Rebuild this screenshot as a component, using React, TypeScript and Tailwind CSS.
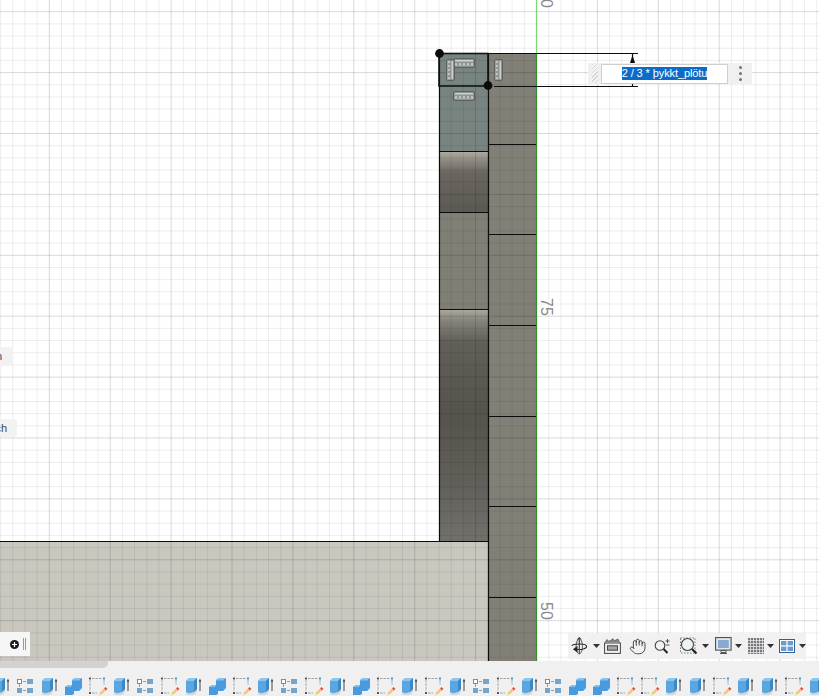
import { Hand } from 'lucide-react';

const range = (n: number) => Array.from({ length: n }, (_, i) => i);

// minor grid every 12.18px, every fifth line is a major one
function GridLines() {
  return (
    <g>
      {range(70).map(k => {
        const x = 0.6 + 12.18 * k;
        const major = (k + 1) % 5 === 0;
        return <line key={k} x1={x} y1={0} x2={x} y2={661} stroke="#000" strokeOpacity={major ? 0.15 : 0.07} />;
      })}
      {range(56).map(k => {
        const y = 11.7 + 12.18 * k;
        const major = k % 5 === 0;
        return <line key={k} x1={0} y1={y} x2={819} y2={y} stroke="#000" strokeOpacity={major ? 0.15 : 0.07} />;
      })}
    </g>
  );
}

function ConstraintH({ x, y }: { x: number; y: number }) {
  return (
    <g transform={`translate(${x} ${y})`}>
      <rect x={0.5} y={0.5} width={21} height={9} rx={1.5} fill="#8f9492" stroke="#3f4644" strokeWidth={0.6} />
      <line x1={2} y1={2.8} x2={20} y2={2.8} stroke="#d6d9d7" strokeWidth={1.3} />
      {[4, 8, 12, 16, 20].map(t => (
        <path key={t} d={`M${t - 2} 7.8 L${t - 1} 5 L${t} 7.8`} fill="none" stroke="#d6d9d7" strokeWidth={0.8} />
      ))}
    </g>
  );
}

function ConstraintV({ x, y }: { x: number; y: number }) {
  return (
    <g transform={`translate(${x} ${y})`}>
      <rect x={0.5} y={0.5} width={8} height={21} rx={1.5} fill="#8f9492" stroke="#3f4644" strokeWidth={0.6} />
      <line x1={6.2} y1={2} x2={6.2} y2={20} stroke="#d6d9d7" strokeWidth={1.3} />
      {[4, 8, 12, 16, 20].map(t => (
        <path key={t} d={`M1.5 ${t - 2} L4 ${t - 1} L1.5 ${t}`} fill="none" stroke="#d6d9d7" strokeWidth={0.8} />
      ))}
    </g>
  );
}

function Drawing() {
  return (
    <svg width={819} height={661} className="absolute inset-0">
      <defs>
        <linearGradient id="bandA" x1="0" y1="0" x2="0" y2="1">
          <stop offset="0" stopColor="#b1aea5" />
          <stop offset="0.16" stopColor="#8c8981" />
          <stop offset="0.36" stopColor="#6a665f" />
          <stop offset="1" stopColor="#5c5953" />
        </linearGradient>
        <linearGradient id="bandB" x1="0" y1="0" x2="0" y2="1">
          <stop offset="0" stopColor="#aeaba3" />
          <stop offset="0.05" stopColor="#86837b" />
          <stop offset="0.14" stopColor="#625f58" />
          <stop offset="0.45" stopColor="#56534c" />
          <stop offset="0.75" stopColor="#615f59" />
          <stop offset="1" stopColor="#71706a" />
        </linearGradient>
      </defs>
      <rect width={819} height={661} fill="#fff" />
      <rect x={0} y={541} width={489} height={120} fill="#cac7bf" />
      <rect x={488} y={53} width={48} height={608} fill="#827f76" />
      <rect x={439} y={53} width={49} height={98} fill="#78847f" />
      <rect x={439} y={151} width={49} height={61} fill="url(#bandA)" />
      <rect x={439} y={212} width={49} height={97} fill="#807f76" />
      <rect x={439} y={309} width={49} height={232} fill="url(#bandB)" />
      <GridLines />

      <g stroke="#0c0c0c" strokeWidth={1.2}>
        <line x1={0} y1={541.5} x2={489} y2={541.5} />
        <line x1={439.5} y1={53} x2={439.5} y2={541} />
        <line x1={488.5} y1={53} x2={488.5} y2={661} />
        <line x1={439} y1={151.5} x2={488} y2={151.5} />
        <line x1={439} y1={212.5} x2={488} y2={212.5} />
        <line x1={439} y1={309.5} x2={488} y2={309.5} />
        {[144.5, 234.5, 325.5, 416.5, 506.5, 597.5].map(y => (
          <line key={y} x1={489} y1={y} x2={536} y2={y} />
        ))}
      </g>

      <line x1={536.5} y1={0} x2={536.5} y2={53} stroke="#78d878" strokeWidth={1.2} />
      <line x1={536.5} y1={53} x2={536.5} y2={661} stroke="#2f8f2f" strokeWidth={1.2} />

      {/* dimension */}
      <g stroke="#0c0c0c" strokeWidth={1.2}>
        <line x1={488} y1={53.5} x2={638} y2={53.5} />
        <line x1={494} y1={86.5} x2={638} y2={86.5} />
        <line x1={632.5} y1={54} x2={632.5} y2={58} />
        <line x1={632.5} y1={84} x2={632.5} y2={86} />
      </g>
      <path d="M632 56.5 H633 L635 63 H630 Z" fill="#0c0c0c" />

      {/* selected rectangle */}
      <rect x={439} y={53.5} width={49} height={32.5} fill="none" stroke="#0e1616" strokeWidth={1.6} />
      <ConstraintH x={453} y={58} />
      <ConstraintV x={446} y={59} />
      <ConstraintV x={494} y={59} />
      <ConstraintH x={453} y={91} />
      <circle cx={439.5} cy={53.5} r={4.4} fill="#0c0c0c" />
      <circle cx={488} cy={85.5} r={4.4} fill="#0c0c0c" />

      {/* ruler numbers */}
      <g fill="#8a8a8a" fontSize={16} fontFamily="Liberation Sans, sans-serif">
        <text transform="translate(541 -1) rotate(90)">0</text>
        <text transform="translate(541 298) rotate(90)">75</text>
        <text transform="translate(541 602) rotate(90)">50</text>
      </g>
    </svg>
  );
}

function Caret() {
  return <svg width={7} height={4} viewBox="0 0 7 4" className="shrink-0"><path d="M0 0 H7 L3.5 4 Z" fill="#333" /></svg>;
}

function OrbitIcon() {
  return (
    <svg width={18} height={20} viewBox="0 0 18 20" fill="none" stroke="#2a2a2a" strokeWidth={1.1}>
      <path d="M9 1 V19 M7 3 L9 1 L11 3" />
      <ellipse cx={9} cy={10.5} rx={3.5} ry={8} fill="none" stroke="#666" />
      <path d="M1 10 C1 7 17 7 17 10.5 C17 13 11 14 6 13.6" />
      <path d="M6.5 11 L3 13.6 L6.5 16 Z" fill="#1a1a1a" />
    </svg>
  );
}

function CaptureIcon() {
  return (
    <svg width={17} height={16} viewBox="0 0 17 16" fill="none" stroke="#444" strokeWidth={1}>
      <rect x={0.6} y={5} width={15.8} height={10.4} fill="#f2f2f2" />
      <rect x={3.5} y={7.8} width={10} height={4.4} fill="#a3a7ac" />
      <path d="M1 4.5 L3 1.5 L5 3.5 L9 0.8 L10 3 L14 1 L15.5 4.5" fill="#888" stroke="#555" strokeWidth={0.8} />
    </svg>
  );
}

function ZoomPlusIcon() {
  return (
    <svg width={17} height={16} viewBox="0 0 17 16" fill="none">
      <circle cx={6} cy={7.5} r={4.8} fill="#eef4f8" stroke="#444" strokeWidth={1.1} />
      <line x1={9.6} y1={11} x2={13.5} y2={15} stroke="#222" strokeWidth={2} />
      <path d="M13.5 1 V5 M11.5 3 H15.5 M11.5 7 H15.5" stroke="#444" strokeWidth={0.9} />
    </svg>
  );
}

function FitIcon() {
  return (
    <svg width={18} height={18} viewBox="0 0 18 18" fill="none">
      <rect x={0.5} y={1} width={14.5} height={15} stroke="#777" strokeDasharray="1.5 1.5" />
      <circle cx={7.5} cy={7.5} r={6} fill="#eef4f8" stroke="#444" strokeWidth={1.1} />
      <line x1={12} y1={12} x2={16.5} y2={16.5} stroke="#222" strokeWidth={2.2} />
    </svg>
  );
}

function DisplayIcon() {
  return (
    <svg width={17} height={18} viewBox="0 0 17 18" fill="none">
      <rect x={0.6} y={0.6} width={15.5} height={12.5} fill="#dfe6ee" stroke="#3f3f3f" />
      <rect x={3} y={3} width={10.8} height={8} fill="#86aad4" />
      <path d="M6 13.5 H11 V15.5 H6 Z M5 16.5 H12" stroke="#555" />
    </svg>
  );
}

function GridIcon() {
  return (
    <svg width={16} height={16} viewBox="0 0 16 16">
      <rect width={16} height={16} fill="#77777d" />
      {[2.5, 5.5, 8.5, 11.5, 14.5].map(p => (
        <g key={p}>
          <line x1={p} y1={0} x2={p} y2={16} stroke="#e4e4e4" strokeWidth={0.8} />
          <line x1={0} y1={p} x2={16} y2={p} stroke="#e4e4e4" strokeWidth={0.8} />
        </g>
      ))}
    </svg>
  );
}

function ViewportsIcon() {
  return (
    <svg width={16} height={14} viewBox="0 0 16 14">
      <rect x={0.5} y={0.5} width={15} height={13} fill="#fff" stroke="#2f5f96" />
      <rect x={2} y={2} width={5.4} height={4.4} fill="#6c9bd0" />
      <rect x={8.6} y={2} width={5.4} height={4.4} fill="#6c9bd0" />
      <rect x={2} y={7.6} width={5.4} height={4.4} fill="#6c9bd0" />
      <rect x={8.6} y={7.6} width={5.4} height={4.4} fill="#6c9bd0" />
    </svg>
  );
}

function NavBar() {
  return (
    <div className="absolute left-[568px] top-[633px] flex h-[26px] w-[238px] items-center bg-[#f1f1f1] pl-[3px]">
      <OrbitIcon />
      <span className="ml-[5px]"><Caret /></span>
      <span className="ml-[4px]"><CaptureIcon /></span>
      <Hand size={19} strokeWidth={1.2} color="#333" className="ml-[8px]" />
      <span className="ml-[8px]"><ZoomPlusIcon /></span>
      <span className="ml-[9px]"><FitIcon /></span>
      <span className="ml-[4px]"><Caret /></span>
      <span className="ml-[6px]"><DisplayIcon /></span>
      <span className="ml-[3px]"><Caret /></span>
      <span className="ml-[6px]"><GridIcon /></span>
      <span className="ml-[3px]"><Caret /></span>
      <span className="ml-[5px]"><ViewportsIcon /></span>
      <span className="ml-[4px]"><Caret /></span>
    </div>
  );
}

function ExpressionInput() {
  return (
    <div className="absolute left-[588px] top-[63px] flex h-[21px] w-[164px] items-center bg-[#f0f0f0]">
      <div className="ml-[4px] h-[19px] w-[6px] bg-[repeating-linear-gradient(135deg,#d4d4d4_0px,#d4d4d4_1px,#f4f4f4_1px,#f4f4f4_3px)]" />
      <div className="ml-[3px] flex h-[20px] w-[127px] items-center justify-center border border-[#cfcfcf] bg-white text-[11px] leading-[13px] tracking-[-0.1px] text-white">
        <span className="bg-[#0a6cc8]">2 / 3 * þykkt_plötu</span>
      </div>
      <div className="ml-[11px] flex flex-col gap-[3px]">
        <span className="h-[3px] w-[3px] rounded-full bg-[#777]" />
        <span className="h-[3px] w-[3px] rounded-full bg-[#777]" />
        <span className="h-[3px] w-[3px] rounded-full bg-[#777]" />
      </div>
    </div>
  );
}

function CubeArrow() {
  return (
    <svg width={24} height={24} viewBox="0 0 24 24">
      <path d="M5 9 L8 6 H16 V19 L13 22 H5 Z" fill="#d5d8da" />
      <path d="M5 8 L8 5 H16 V16 L13 19 C10 20.5 7 20.5 5 19 Z" fill="#5aa6df" />
      <path d="M5 8 L8 5 H16 L13 8 Z" fill="#8cc5ee" />
      <path d="M13 8 L16 5 V16 L13 19 Z" fill="#3b88c4" />
      <path d="M19 18 V8" stroke="#333" strokeWidth={0.9} />
      <path d="M17.8 8.5 L19 5.5 L20.2 8.5 Z" fill="#333" />
    </svg>
  );
}

function Nodes() {
  return (
    <svg width={24} height={24} viewBox="0 0 24 24">
      <rect x={4.5} y={6.5} width={4} height={4} fill="#fff" stroke="#888" />
      <rect x={14} y={6} width={6} height={5} fill="#76a5cc" />
      <rect x={4} y={15} width={5} height={5} fill="#76a5cc" />
      <rect x={14} y={15} width={6} height={5} fill="#76a5cc" />
      <path d="M10 8.5 H13 M6.5 11 V14 M10 17.5 H13" stroke="#999" />
    </svg>
  );
}

function Stairs() {
  return (
    <svg width={24} height={24} viewBox="0 0 24 24">
      <path d="M4 14 L7 12 H11 V7 L14 5 H21 V15 L18 18 H13 V21 L11 22 H4 Z" fill="#4a9ade" />
      <path d="M11 7 L14 5 H21 L18 7.5 H11 Z M4 14 L7 12 H11 L10 14 Z" fill="#84c1ef" />
    </svg>
  );
}

function SketchPencil() {
  return (
    <svg width={24} height={24} viewBox="0 0 24 24">
      <path d="M5 7 V18 M7 20 H12 M7 5.5 H17 M19 7 V12" fill="none" stroke="#999" strokeWidth={0.9} strokeDasharray="2.5 1" />
      <rect x={4} y={4.5} width={2} height={2} fill="#555" />
      <rect x={18} y={4.5} width={2} height={2} fill="#2e9bd6" />
      <rect x={4} y={19} width={2} height={2} fill="#555" />
      <path d="M14 22 L15 19.5 L19 15.5 L21 17.5 L17 21 Z" fill="#efc877" />
      <path d="M19 15.5 L20.5 14 L22.5 16 L21 17.5 Z" fill="#dd4f3f" />
    </svg>
  );
}

// c cube with arrow, n nodes, s stairs, k sketch pencil
const toolbar = 'cncskcnkcskcnkcskckcnkcnsskkcckcckc'.split('');

function Toolbar() {
  return (
    <div className="relative h-[35px] shrink-0 overflow-hidden bg-[#f0f0f0]">
      <div className="absolute left-0 top-0 h-[7px] w-[108px] rounded-br-[5px] bg-[#d2d2d2]" />
      <div className="ml-[-11px] flex w-[860px] pt-[12px]">
        {toolbar.map((t, i) => (
          <div key={i} className="h-[24px] w-[24px] shrink-0">
            {t === 'c' && <CubeArrow />}
            {t === 'n' && <Nodes />}
            {t === 's' && <Stairs />}
            {t === 'k' && <SketchPencil />}
          </div>
        ))}
      </div>
    </div>
  );
}

export default function App() {
  return (
    <div className="flex h-[696px] w-[819px] flex-col overflow-hidden bg-white font-['Liberation_Sans',Arial,sans-serif]">
      <div className="relative h-[661px] shrink-0">
        <Drawing />

        {/* clipped browser labels on the left edge */}
        <div className="absolute left-0 top-[347px] flex h-[19px] w-[13px] items-center justify-end rounded-r-sm bg-[#f2f2f2] pr-[11px] text-[11px] text-[#444]">
          n
        </div>
        <div className="absolute left-0 top-[419px] flex h-[18px] w-[17px] items-center justify-end rounded-r-sm bg-[#f2f2f2] pr-[10px] text-[11px] text-[#444]">
          ch
        </div>

        {/* timeline stub */}
        <div className="absolute left-0 top-[632px] flex h-[24px] w-[30px] items-center bg-[#f6f6f6] pl-[10px]">
          <svg width={9} height={9} viewBox="0 0 9 9">
            <circle cx={4.5} cy={4.5} r={4.5} fill="#1c1c1c" />
            <path d="M4.5 2 V7 M2 4.5 H7" stroke="#fff" strokeWidth={1.2} />
          </svg>
          <div className="ml-[4px] h-[12px] w-[3px] border-x border-[#9a9a9a]" />
        </div>

        <ExpressionInput />
        <NavBar />
      </div>
      <Toolbar />
    </div>
  );
}
